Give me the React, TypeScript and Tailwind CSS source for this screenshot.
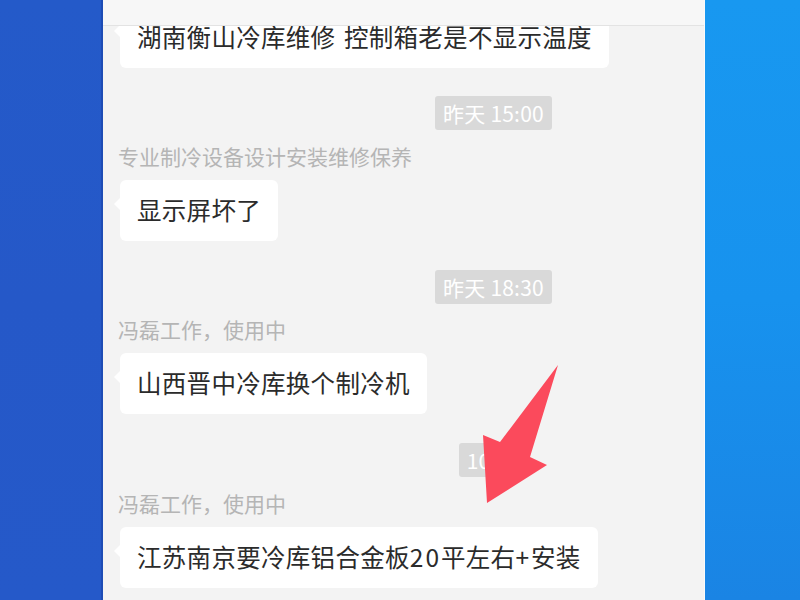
import React from "react";

const font = { fontFamily: '"Noto Sans CJK SC", "Noto Sans", sans-serif' };

function Bubble({ children, className = "" }: { children: React.ReactNode; className?: string }) {
  return (
    <div className={`relative ml-[17px] self-start rounded-[6px] bg-white px-[17px] py-[14px] text-[24.5px] leading-[32px] tracking-[0.3px] text-[#2b2b2b] ${className}`}>
      <span className="absolute left-[-6px] top-[18px] h-0 w-0 border-y-[6px] border-r-[6px] border-y-transparent border-r-white" />
      {children}
    </div>
  );
}

function Stamp({ text, className = "" }: { text: string; className?: string }) {
  return (
    <div className={`flex justify-center pl-[180px] ${className}`}>
      <div className="h-[34px] rounded-[3px] bg-[#d9d9d9] px-[8px] text-[21px] leading-[34px] tracking-[0.2px] text-white">{text}</div>
    </div>
  );
}

function Name({ text, className = "" }: { text: string; className?: string }) {
  return <div className={`ml-[15px] text-[21px] leading-[24px] text-[#b5b5b5] ${className}`}>{text}</div>;
}

export default function App() {
  return (
    <div className="relative flex h-[600px] w-[800px] overflow-hidden" style={font}>
      <div className="w-[101px] bg-gradient-to-b from-[#245ac9] via-[#2558c8] to-[#2559c9]" />
      <div className="w-[2px] bg-[#1d4cb5]" />
      <div className="flex w-[601px] flex-col overflow-hidden bg-[#f3f3f3]">
        <div className="relative z-10 h-[26px] shrink-0 border-b border-[#e3e3e3] bg-[#f7f7f7]" />
        <div className="flex flex-col">
          <Bubble className="mt-[-19px] pb-[15px]">
            湖南衡山冷库维修<span className="tracking-[3px]"> </span>控制箱老是不显示温度
          </Bubble>
          <Stamp text="昨天 15:00" className="mt-[28px]" />
          <Name text="专业制冷设备设计安装维修保养" className="mt-[14px]" />
          <Bubble className="mt-[12px] pb-[15px]">显示屏坏了</Bubble>
          <Stamp text="昨天 18:30" className="mt-[29px]" />
          <Name text="冯磊工作，使用中" className="mt-[13px]" />
          <Bubble className="mt-[12px] pb-[15px]">山西晋中冷库换个制冷机</Bubble>
          <Stamp text="10:58" className="mt-[29px]" />
          <Name text="冯磊工作，使用中" className="mt-[14px]" />
          <Bubble className="mt-[12px] pb-[15px]">
            江苏南京要冷库铝合金板<span className="tracking-[2px]">20</span>平左右<span className="tracking-[2px]">+</span>安装
          </Bubble>
        </div>
      </div>
      <div className="w-[1px] bg-[#fafafa]" />
      <div className="flex-1 bg-gradient-to-b from-[#1898f0] via-[#1792ee] to-[#1a84e4]" />
      <svg className="absolute left-0 top-0" width="800" height="600" viewBox="0 0 800 600">
        <polygon points="558,365 530,457 547,465 487,503 483,435 500,442" fill="#fb4a5c" />
      </svg>
    </div>
  );
}
